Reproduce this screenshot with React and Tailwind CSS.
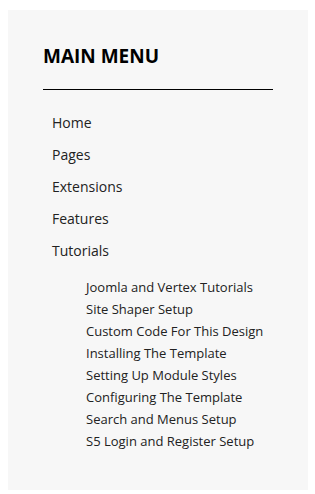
const mainItems = ["Home", "Pages", "Extensions", "Features"];

const tutorials = [
  "Joomla and Vertex Tutorials",
  "Site Shaper Setup",
  "Custom Code For This Design",
  "Installing The Template",
  "Setting Up Module Styles",
  "Configuring The Template",
  "Search and Menus Setup",
  "S5 Login and Register Setup",
];

export default function App() {
  return (
    <div
      className="min-h-[494px] bg-white pt-[10px] pl-2"
      style={{ fontFamily: '"Open Sans", "Noto Sans", sans-serif' }}
    >
      <div className="w-[300px] bg-[#f7f7f7] px-[35px] pt-[32px] pb-[38px]">
        <h2 className="border-b border-black pb-[19px] text-[19px] font-bold leading-[28px] text-black">
          MAIN MENU
        </h2>
        <ul className="mt-[17px] pl-[9px]">
          {mainItems.map((item) => (
            <li key={item} className="text-[14px] leading-[32px] text-[#222]">
              <a href="#">{item}</a>
            </li>
          ))}
          <li className="text-[14px] leading-[32px] text-[#222]">
            <a href="#">Tutorials</a>
            <ul className="mt-[9px] pl-[34px]">
              {tutorials.map((t) => (
                <li key={t} className="text-[13px] leading-[22px] text-[#222]">
                  <a href="#">{t}</a>
                </li>
              ))}
            </ul>
          </li>
        </ul>
      </div>
    </div>
  );
}
